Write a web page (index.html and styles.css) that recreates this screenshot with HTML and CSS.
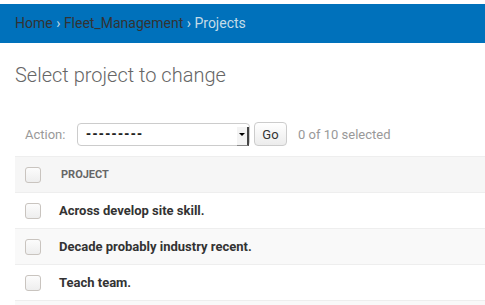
FILE: index.html
```html
<!DOCTYPE html>
<html>
<head>
<meta charset="utf-8">
<link rel="stylesheet" href="styles.css">
</head>
<body>
<div class="page">
  <div class="breadcrumbs">
    <a class="crumb-link" href="#">Home</a> <span class="sep">›</span> <a class="crumb-link" href="#">Fleet_Management</a> <span class="sep">›</span> <span class="current">Projects</span>
  </div>
  <div class="content">
    <h1 class="title">Select project to change</h1>
    <div class="actions">
      <span class="action-label">Action:</span>
      <div class="select">
        <span class="select-text">---------</span>
        <span class="select-btn"><span class="arrow"></span></span>
      </div>
      <button class="go">Go</button>
      <span class="counter">0 of 10 selected</span>
    </div>
    <table class="results">
      <thead>
        <tr>
          <th class="cb-cell"><span class="cb"></span></th>
          <th class="name-cell">PROJECT</th>
        </tr>
      </thead>
      <tbody>
        <tr class="row1"><td class="cb-cell"><span class="cb"></span></td><td class="name-cell">Across develop site skill.</td></tr>
        <tr class="row2"><td class="cb-cell"><span class="cb"></span></td><td class="name-cell">Decade probably industry recent.</td></tr>
        <tr class="row1"><td class="cb-cell"><span class="cb"></span></td><td class="name-cell">Teach team.</td></tr>
        <tr class="row2"><td class="cb-cell"></td><td class="name-cell"></td></tr>
      </tbody>
    </table>
  </div>
</div>
</body>
</html>
```

FILE: styles.css
```css
html, body {
  margin: 0;
  padding: 0;
  background: #fff;
  overflow: hidden;
}
body {
  font-family: Roboto, "Liberation Sans", sans-serif;
  color: #333;
}
.page {
  padding-top: 4px;
}
.breadcrumbs {
  background: #0071bb;
  padding: 10px 15px;
  font-size: 14px;
  line-height: 19px;
  color: #c4dce8;
  white-space: nowrap;
}
.crumb-link {
  color: #333;
  text-decoration: none;
}
.sep {
  color: #c4dce8;
}
.current {
  color: #c4dce8;
}
.content {
  padding: 20px 0 0 15px;
}
.title {
  margin: 0 0 27px 0;
  font-size: 20px;
  line-height: 24px;
  font-weight: 300;
  color: #666;
}
.actions {
  display: flex;
  align-items: center;
  padding: 8px 10px 10px 10px;
  font-size: 13px;
}
.action-label {
  color: #999;
  width: 52px;
}
.select {
  position: relative;
  display: flex;
  align-items: center;
  width: 171px;
  height: 21px;
  border: 1px solid #ccc;
  border-radius: 4px;
  background: #fff;
}
.select-text {
  padding-left: 8px;
  font-family: "DejaVu Sans", sans-serif;
  font-size: 12px;
  font-weight: bold;
  letter-spacing: 1.4px;
  color: #222;
}
.select-btn {
  position: absolute;
  right: 0;
  top: 3px;
  bottom: -1px;
  width: 10px;
  border-right: 2px solid #444;
  border-bottom: 1px solid #888;
  background: #f4f4f4;
  display: flex;
  align-items: center;
  justify-content: center;
}
.arrow {
  width: 0;
  height: 0;
  border-left: 3px solid transparent;
  border-right: 3px solid transparent;
  border-top: 3px solid #000;
  margin-top: -2px;
}
.go {
  margin-left: 4px;
  width: 33px;
  height: 24px;
  border: 1px solid #ccc;
  border-radius: 4px;
  background: linear-gradient(#fff, #ececec);
  font-family: Roboto, "Liberation Sans", sans-serif;
  font-size: 13px;
  color: #333;
  padding: 0;
}
.counter {
  margin-left: 11px;
  color: #999;
}
.results {
  width: 100%;
  border-collapse: collapse;
  font-size: 13px;
}
.results th {
  background: #f6f6f6;
  border-top: 1px solid #eee;
  border-bottom: 1px solid #eee;
  height: 35px;
  padding: 0;
  text-align: left;
  font-size: 11px;
  font-weight: bold;
  color: #666;
  text-transform: uppercase;
}
.results td {
  height: 35px;
  padding: 0;
  border-bottom: 1px solid #eee;
  font-weight: bold;
  color: #333;
}
.row2 td {
  background: #f9f9f9;
}
.results .cb-cell {
  width: 34px;
  padding-left: 10px;
}
.results th.name-cell {
  padding-left: 2px;
}
.cb {
  display: block;
  width: 14px;
  height: 14px;
  border: 1px solid #c9c4bf;
  border-radius: 3px;
  background: linear-gradient(#fcfcfc, #eeeeee);
}
```
